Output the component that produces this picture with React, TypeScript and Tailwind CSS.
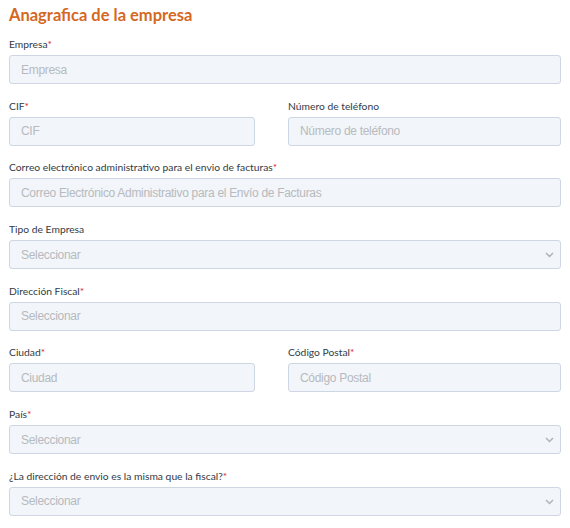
import React from 'react';

interface Field {
  label: string;
  placeholder: string;
  required?: boolean;
  select?: boolean;
}

const Label: React.FC<{ text: string; required?: boolean }> = ({ text, required }) => (
  <label className="block h-[12px] mb-[5px] text-[10.3px] leading-[12px] text-[#333a45] font-['Lato',sans-serif]">
    {text}
    {required && <span className="text-[#e0262f]">*</span>}
  </label>
);

const Input: React.FC<Field> = ({ label, placeholder, required, select }) => (
  <div>
    <Label text={label} required={required} />
    <div className="relative h-[29px] bg-[#f2f5f9] border border-[#cdd6e2] rounded-[3px] flex items-center pl-[11px]">
      <span className="text-[12px] tracking-[-0.3px] text-[#b7babe] font-['Liberation_Sans',Arial,sans-serif]">{placeholder}</span>
      {select && (
        <svg className="absolute right-[6px] top-[11px]" width="9" height="6" viewBox="0 0 9 6" fill="none">
          <path d="M1 1l3.5 3.5L8 1" stroke="#b0b4b9" strokeWidth="1.5" />
        </svg>
      )}
    </div>
  </div>
);

export default function App() {
  return (
    <div className="w-[570px] h-[528px] bg-white px-[9px] pt-[4px] overflow-hidden">
      <h1 className="text-[16.5px] font-bold text-[#d5681f] leading-[22px] font-['Lato',sans-serif] mb-[12px]">
        Anagrafica de la empresa
      </h1>
      <div className="flex flex-col gap-[15.7px] w-[552px]">
        <Input label="Empresa" placeholder="Empresa" required />
        <div className="flex gap-[33px]">
          <div className="w-[246px]">
            <Input label="CIF" placeholder="CIF" required />
          </div>
          <div className="flex-1">
            <Input label="Número de teléfono" placeholder="Número de teléfono" />
          </div>
        </div>
        <Input
          label="Correo electrónico administrativo para el envio de facturas"
          placeholder="Correo Electrónico Administrativo para el Envío de Facturas"
          required
        />
        <Input label="Tipo de Empresa" placeholder="Seleccionar" select />
        <Input label="Dirección Fiscal" placeholder="Seleccionar" required />
        <div className="flex gap-[33px]">
          <div className="w-[246px]">
            <Input label="Ciudad" placeholder="Ciudad" required />
          </div>
          <div className="flex-1">
            <Input label="Código Postal" placeholder="Código Postal" required />
          </div>
        </div>
        <Input label="País" placeholder="Seleccionar" required select />
        <Input label="¿La dirección de envio es la misma que la fiscal?" placeholder="Seleccionar" required select />
      </div>
    </div>
  );
}
